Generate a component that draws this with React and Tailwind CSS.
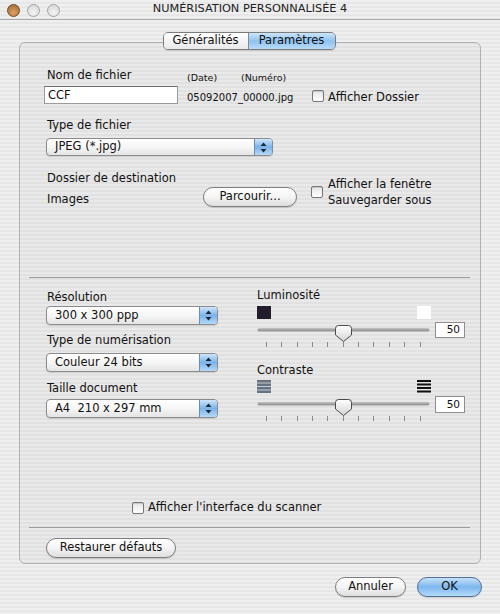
import React from "react"

const Arrows = () => (
  <svg width="7" height="11" viewBox="0 0 7 11">
    <path d="M3.5 0.5 L6.5 4 H0.5 Z" fill="#1c2836" />
    <path d="M3.5 10.5 L6.5 7 H0.5 Z" fill="#1c2836" />
  </svg>
)

const Popup = ({ label, className }) => (
  <div className={`flex rounded-[4px] border border-[#8c8c8c] bg-gradient-to-b from-white via-[#f6f6f6] to-[#e4e4e4] overflow-hidden shadow-[0_1px_1px_rgba(0,0,0,0.12)] ${className}`}>
    <div className="flex-1 flex items-center pl-[8px]">{label}</div>
    <div className="w-[18px] flex items-center justify-center border-l border-[#6d8db3] bg-gradient-to-b from-[#cfe6fb] via-[#79b3ea] to-[#b5d9f8]">
      <Arrows />
    </div>
  </div>
)

const AquaButton = ({ label, className, blue }) => (
  <div
    className={`flex items-center justify-center rounded-full border h-[20px] shadow-[0_1px_1px_rgba(0,0,0,0.15)] ${
      blue
        ? "border-[#4f6f99] bg-gradient-to-b from-[#c6e1fb] via-[#7db7ee] to-[#b4dbfb]"
        : "border-[#7e7e7e] bg-gradient-to-b from-white via-[#f4f4f4] to-[#dedede]"
    } ${className}`}
  >
    {label}
  </div>
)

const Checkbox = ({ className }) => (
  <span
    className={`block w-[12px] h-[12px] shrink-0 rounded-[2px] border border-[#777] bg-gradient-to-b from-[#e6e6e6] to-white shadow-[inset_0_1px_1px_rgba(0,0,0,0.15)] ${className}`}
  />
)

const ticks = [9, 24, 40, 55, 70, 86, 101, 116, 132, 147, 163]

const Slider = () => (
  <svg width="173" height="26" viewBox="0 0 173 26">
    <defs>
      <linearGradient id="thumb" x1="0" y1="0" x2="0" y2="1">
        <stop offset="0" stopColor="#ffffff" />
        <stop offset="1" stopColor="#d4d4d4" />
      </linearGradient>
    </defs>
    <line x1="2" y1="8" x2="171" y2="8" stroke="#9a9a9a" strokeWidth="3" strokeLinecap="round" />
    <line x1="2" y1="7" x2="171" y2="7" stroke="#b8b8b8" strokeWidth="1" strokeLinecap="round" />
    {ticks.map((x) => (
      <line key={x} x1={x + 0.5} y1="20" x2={x + 0.5} y2="25" stroke="#8a8a8a" strokeWidth="1" />
    ))}
    <path
      d="M81.5 3.5 H91.5 Q94.5 3.5 94.5 6.5 V13 L86.5 19.5 L78.5 13 V6.5 Q78.5 3.5 81.5 3.5 Z"
      fill="url(#thumb)"
      stroke="#4a4a4a"
      strokeWidth="1"
    />
  </svg>
)

const ValueBox = ({ className }) => (
  <div className={`w-[30px] border border-[#8e8e8e] bg-white flex items-center justify-end pr-[4px] text-[10.5px] ${className}`}>
    50
  </div>
)

const Light = ({ color }) => (
  <span className={`block w-[14px] h-[13px] ${color}`} />
)

// bars for the contrast scale ends
const ContrastIcon = ({ dark }) => (
  <svg width="14" height="13" viewBox="0 0 14 13">
    {!dark && <rect x="0" y="0" width="14" height="13" fill="#c9ced4" />}
    {[0, 3.5, 7, 10.5].map((y) => (
      <rect key={y} x="0" y={y} width="14" height={dark ? 2 : 2.5} fill={dark ? "#111" : "#66727f"} />
    ))}
  </svg>
)

export default function App() {
  return (
    <div className="w-[500px] h-[614px] overflow-hidden font-['DejaVu_Sans',sans-serif] text-[11.5px] text-[#111] bg-[repeating-linear-gradient(180deg,#efefef_0px,#efefef_2px,#e7e7e7_2px,#e7e7e7_4px)]">
      {/* title bar */}
      <div className="relative h-[20px] flex items-center justify-center border-b border-[#a9a9a9]">
        <div className="absolute left-[7px] top-[4px] flex gap-[7px]">
          <span className="block w-[13px] h-[13px] rounded-full border border-[#6b4a2a] bg-[radial-gradient(circle_at_50%_70%,#e0a060,#9c6434)]" />
          <span className="block w-[13px] h-[13px] rounded-full border border-[#a4a4a4] bg-[radial-gradient(circle_at_50%_70%,#f4f4f4,#d2d2d2)]" />
          <span className="block w-[13px] h-[13px] rounded-full border border-[#a4a4a4] bg-[radial-gradient(circle_at_50%_70%,#f4f4f4,#d2d2d2)]" />
        </div>
        <span className="text-[11.3px] text-[#222]">NUMÉRISATION PERSONNALISÉE 4</span>
      </div>

      {/* tabs */}
      <div className="relative z-10 mt-[12px] flex justify-center">
        <div className="flex h-[18px] ml-[-2px] rounded-[5px] border border-[#7c7c7c] overflow-hidden shadow-[0_1px_1px_rgba(0,0,0,0.12)]">
          <div className="w-[85px] flex items-center justify-center bg-gradient-to-b from-white to-[#e9e9e9] border-r border-[#8a8a8a]">
            Généralités
          </div>
          <div className="w-[86px] flex items-center justify-center bg-gradient-to-b from-[#cde5fb] via-[#8dc2f0] to-[#b9dcfa]">
            Paramètres
          </div>
        </div>
      </div>

      {/* group box */}
      <div className="mx-[19px] -mt-[8px] h-[522px] rounded-[6px] border border-[#b0b0b0] bg-black/[0.025]">
        <div className="pl-[27px] pt-[26px]">
          <div className="flex h-[14px] items-center">
            <div className="w-[140px]">Nom de fichier</div>
            <div className="w-[54px] text-[9.5px] mt-[5px]">(Date)</div>
            <div className="text-[9.5px] mt-[5px]">(Numéro)</div>
          </div>
          <div className="flex h-[18px] mt-[3px] items-center">
            <div className="w-[140px]">
              <div className="-ml-[3px] w-[134px] h-[18px] bg-white border border-[#9a9a9a] border-t-[#6f6f6f] flex items-center pl-[3px] pt-[2px]">
                CCF
              </div>
            </div>
            <div className="w-[125px] text-[10px] mt-[5px]">05092007_00000.jpg</div>
            <Checkbox className="mt-[2px]" />
            <span className="ml-[4px] mt-[6px]">Afficher Dossier</span>
          </div>

          <div className="mt-[15px] h-[14px] flex items-center">Type de fichier</div>
          <Popup label="JPEG (*.jpg)" className="mt-[5px] -ml-[1px] w-[227px] h-[18px]" />

          <div className="mt-[16px] h-[14px] flex items-center">Dossier de destination</div>
          <div className="flex items-start mt-[1px] h-[20px]">
            <div className="w-[156px] h-[20px] leading-[20px] pt-[2px]">Images</div>
            <AquaButton label="Parcourir..." className="w-[94px]" />
            <div className="flex items-start ml-[14px] -mt-[11px]">
              <Checkbox className="mt-[10px]" />
              <div className="ml-[5px] leading-[16px]">
                Afficher la fenêtre
                <br />
                Sauvegarder sous
              </div>
            </div>
          </div>
        </div>

        <div className="mt-[70px] ml-[9px] mr-[10px] h-px bg-[#9c9c9c]" />

        <div className="flex pl-[27px]">
          <div className="w-[210px]">
            <div className="mt-[13px] h-[14px] flex items-center">Résolution</div>
            <Popup label="300 x 300 ppp" className="mt-[1px] -ml-[1px] w-[172px] h-[19px]" />
            <div className="mt-[9px] h-[14px] flex items-center">Type de numérisation</div>
            <Popup label="Couleur 24 bits" className="mt-[5px] -ml-[1px] w-[172px] h-[19px]" />
            <div className="mt-[10px] h-[14px] flex items-center">Taille document</div>
            <Popup label="A4  210 x 297 mm" className="mt-[3px] -ml-[1px] w-[172px] h-[19px] whitespace-pre" />
          </div>
          <div>
            <div className="mt-[11px] h-[14px] flex items-center">Luminosité</div>
            <div className="mt-[3px] w-[174px] flex justify-between">
              <Light color="bg-[#231d2b]" />
              <Light color="bg-white" />
            </div>
            <div className="flex mt-[3px]">
              <Slider />
              <ValueBox className="ml-[5px] h-[16px]" />
            </div>
            <div className="mt-[16px] h-[14px] flex items-center">Contraste</div>
            <div className="mt-[2px] w-[174px] flex justify-between">
              <ContrastIcon />
              <ContrastIcon dark />
            </div>
            <div className="flex mt-[3px]">
              <Slider />
              <ValueBox className="ml-[5px] h-[17px]" />
            </div>
          </div>
        </div>

        <div className="mt-[79px] pl-[112px] h-[14px] flex items-center">
          <Checkbox />
          <span className="ml-[4px]">Afficher l'interface du scanner</span>
        </div>

        <div className="mt-[12px] ml-[9px] mr-[10px] h-px bg-[#9c9c9c]" />

        <div className="mt-[10px] pl-[26px]">
          <AquaButton label="Restaurer défauts" className="w-[130px]" />
        </div>
      </div>

      <div className="mt-[13px] pr-[18px] flex justify-end gap-[11px]">
        <AquaButton label="Annuler" className="w-[71px]" />
        <AquaButton label="OK" className="w-[65px]" blue />
      </div>
    </div>
  )
}
